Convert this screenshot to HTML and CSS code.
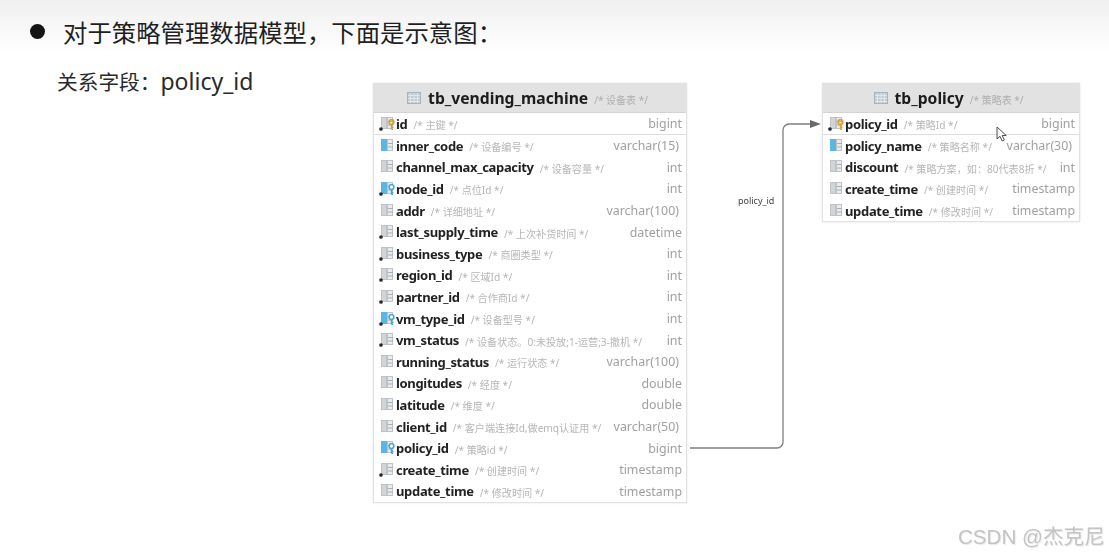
FILE: index.html
```html
<!DOCTYPE html>
<html lang="zh-CN">
<head>
<meta charset="utf-8">
<title>策略管理数据模型</title>
<link rel="stylesheet" href="styles.css">
</head>
<body>
<svg class="defs" width="0" height="0" aria-hidden="true">
  <defs>
    <symbol id="head" viewBox="0 0 14 12">
      <rect x="0" y="0" width="14" height="12" fill="#c3cad3"/>
      <path d="M0 3.500h14M0 6.500h14M0 9.500h14M3.500 0v12M7 0v12M10.500 0v12" stroke="#e3e6ea" stroke-width="1"/>
      <rect x=".5" y=".5" width="13" height="11" fill="none" stroke="#aab2bc"/>
    </symbol>
    <symbol id="grid" viewBox="0 0 12 12">
      <rect x="0" y="0" width="12" height="12" fill="#bfc3c7"/>
      <rect x="1" y="1" width="4" height="10" fill="#d2d5d8"/>
      <path d="M7 1h4v10H7z" fill="#e9ebed"/>
      <path d="M7 4.500h5M7 8h5" stroke="#a9aeb3" stroke-width="1"/>
    </symbol>
    <symbol id="gridblue" viewBox="0 0 12 12">
      <rect x="0" y="0" width="12" height="12" fill="#bfc3c7"/>
      <rect x="0" y="0" width="6" height="12" fill="#5db5e2"/>
      <path d="M7 1h4v10H7z" fill="#e9ebed"/>
      <path d="M7 4.500h5M7 8h5" stroke="#a9aeb3" stroke-width="1"/>
    </symbol>
    <symbol id="dot" viewBox="0 0 5 5"><circle cx="2.500" cy="2.500" r="2.300" fill="#26292c"/></symbol>
    <symbol id="keygold" viewBox="0 0 7 11">
      <circle cx="3.500" cy="3" r="2.400" fill="none" stroke="#dca02e" stroke-width="1.600"/>
      <path d="M3.500 5v5.500M3.500 8.500h2M3.500 10.500h1.500" stroke="#dca02e" stroke-width="1.400" fill="none"/>
    </symbol>
    <symbol id="keyblue" viewBox="0 0 7 11">
      <circle cx="3.500" cy="3" r="2.400" fill="#fff" stroke="#3da6dc" stroke-width="1.500"/>
      <path d="M3.500 5v5.500M3.500 8.500h2M3.500 10.500h1.500" stroke="#3da6dc" stroke-width="1.400" fill="none"/>
    </symbol>
  </defs>
</svg>

<div class="slide">
  <header class="top">
    <h1 class="bullet"><span class="disc"></span>对于策略管理数据模型，下面是示意图：</h1>
    <p class="sub"><span class="sub-cn">关系字段：</span>policy_id</p>
  </header>

  <section class="table t-vm">
    <div class="thead"><svg class="ticon"><use href="#head"/></svg><b>tb_vending_machine</b><i>/* 设备表 */</i></div>
    <div class="row pk"><span class="ic"><svg class="g"><use href="#grid"/></svg><svg class="d"><use href="#dot"/></svg><svg class="k"><use href="#keygold"/></svg></span><b>id</b><i>/* 主键 */</i><em>bigint</em></div>
    <div class="row"><span class="ic"><svg class="g"><use href="#gridblue"/></svg></span><b>inner_code</b><i>/* 设备编号 */</i><em class="vc">varchar(15)</em></div>
    <div class="row"><span class="ic"><svg class="g"><use href="#grid"/></svg></span><b>channel_max_capacity</b><i>/* 设备容量 */</i><em>int</em></div>
    <div class="row"><span class="ic"><svg class="g"><use href="#gridblue"/></svg><svg class="d"><use href="#dot"/></svg><svg class="k"><use href="#keyblue"/></svg></span><b>node_id</b><i>/* 点位Id */</i><em>int</em></div>
    <div class="row"><span class="ic"><svg class="g"><use href="#grid"/></svg></span><b>addr</b><i>/* 详细地址 */</i><em class="vc">varchar(100)</em></div>
    <div class="row"><span class="ic"><svg class="g"><use href="#grid"/></svg><svg class="d"><use href="#dot"/></svg></span><b>last_supply_time</b><i>/* 上次补货时间 */</i><em>datetime</em></div>
    <div class="row"><span class="ic"><svg class="g"><use href="#grid"/></svg><svg class="d"><use href="#dot"/></svg></span><b>business_type</b><i>/* 商圈类型 */</i><em>int</em></div>
    <div class="row"><span class="ic"><svg class="g"><use href="#grid"/></svg><svg class="d"><use href="#dot"/></svg></span><b>region_id</b><i>/* 区域Id */</i><em>int</em></div>
    <div class="row"><span class="ic"><svg class="g"><use href="#grid"/></svg><svg class="d"><use href="#dot"/></svg></span><b>partner_id</b><i>/* 合作商Id */</i><em>int</em></div>
    <div class="row"><span class="ic"><svg class="g"><use href="#gridblue"/></svg><svg class="d"><use href="#dot"/></svg><svg class="k"><use href="#keyblue"/></svg></span><b>vm_type_id</b><i>/* 设备型号 */</i><em>int</em></div>
    <div class="row"><span class="ic"><svg class="g"><use href="#grid"/></svg><svg class="d"><use href="#dot"/></svg></span><b>vm_status</b><i>/* 设备状态。0:未投放;1-运营;3-撤机 */</i><em>int</em></div>
    <div class="row"><span class="ic"><svg class="g"><use href="#grid"/></svg></span><b>running_status</b><i>/* 运行状态 */</i><em class="vc">varchar(100)</em></div>
    <div class="row"><span class="ic"><svg class="g"><use href="#grid"/></svg></span><b>longitudes</b><i>/* 经度 */</i><em>double</em></div>
    <div class="row"><span class="ic"><svg class="g"><use href="#grid"/></svg></span><b>latitude</b><i>/* 维度 */</i><em>double</em></div>
    <div class="row"><span class="ic"><svg class="g"><use href="#grid"/></svg></span><b>client_id</b><i>/* 客户端连接Id,做emq认证用 */</i><em class="vc">varchar(50)</em></div>
    <div class="row"><span class="ic"><svg class="g"><use href="#gridblue"/></svg><svg class="k"><use href="#keyblue"/></svg></span><b>policy_id</b><i>/* 策略id */</i><em>bigint</em></div>
    <div class="row"><span class="ic"><svg class="g"><use href="#grid"/></svg><svg class="d"><use href="#dot"/></svg></span><b>create_time</b><i>/* 创建时间 */</i><em>timestamp</em></div>
    <div class="row"><span class="ic"><svg class="g"><use href="#grid"/></svg></span><b>update_time</b><i>/* 修改时间 */</i><em>timestamp</em></div>
  </section>

  <svg class="link" viewBox="0 0 140 330" aria-hidden="true">
    <path d="M2 327H89a6 6 0 0 0 6-6V9a6 6 0 0 1 6-6H124" fill="none" stroke="#7d7d7d" stroke-width="1.300"/>
    <path d="M122 -1l11 4-11 4z" fill="#6a6a6a"/>
  </svg>
  <span class="linklabel">policy_id</span>

  <section class="table t-policy">
    <div class="thead"><svg class="ticon"><use href="#head"/></svg><b>tb_policy</b><i>/* 策略表 */</i></div>
    <div class="row pk"><span class="ic"><svg class="g"><use href="#grid"/></svg><svg class="d"><use href="#dot"/></svg><svg class="k"><use href="#keygold"/></svg></span><b>policy_id</b><i>/* 策略Id */</i><em>bigint</em></div>
    <div class="row"><span class="ic"><svg class="g"><use href="#gridblue"/></svg></span><b>policy_name</b><i>/* 策略名称 */</i><em class="vc">varchar(30)</em></div>
    <div class="row"><span class="ic"><svg class="g"><use href="#grid"/></svg></span><b>discount</b><i>/* 策略方案，如：80代表8折 */</i><em>int</em></div>
    <div class="row"><span class="ic"><svg class="g"><use href="#grid"/></svg></span><b>create_time</b><i>/* 创建时间 */</i><em>timestamp</em></div>
    <div class="row"><span class="ic"><svg class="g"><use href="#grid"/></svg></span><b>update_time</b><i>/* 修改时间 */</i><em>timestamp</em></div>
  </section>

  <svg class="cursor" viewBox="0 0 12 17" aria-hidden="true">
    <path d="M1 1v12l3-2.700 2.200 4.700 2.200-1-2.200-4.500h4z" fill="#fff" stroke="#4a4a4a" stroke-width="1"/>
  </svg>

  <span class="mark">CSDN @杰克尼</span>
</div>
</body>
</html>
```

FILE: styles.css
```css
* { box-sizing: border-box; }
html, body { margin: 0; padding: 0; background: #fff; }
.defs { position: absolute; }
.slide {
  position: relative;
  width: 1109px;
  height: 557px;
  overflow: hidden;
  font-family: "Noto Sans", "Noto Sans CJK SC", sans-serif;
  filter: blur(0.55px);
}
.top {
  height: 100px;
  padding: 12px 0 0 30px;
  background: linear-gradient(#efefef 0, #f7f7f7 25px, #fff 52px);
}
.bullet {
  display: flex;
  align-items: center;
  margin: 0;
  height: 38px;
  font-size: 24.4px;
  font-weight: 400;
  color: #1f1f1f;
  font-family: "Noto Sans CJK SC", sans-serif;
}
.disc {
  width: 15px;
  height: 15px;
  margin-right: 18px;
  border-radius: 50%;
  background: #141414;
}
.sub {
  margin: 16px 0 0 27px;
  font-size: 23px;
  line-height: 30px;
  color: #2a2a2a;
  font-family: "Noto Sans", "Noto Sans CJK SC", sans-serif;
}
.sub-cn { font-size: 20.7px; }
.table {
  position: absolute;
  top: 83px;
  background: #fff;
  border: 1px solid #e2e2e2;
  border-top: 0;
  box-shadow: 0 0 2px #e4e4e4;
}
.t-vm { left: 373px; width: 314px; height: 420px; }
.t-policy { left: 822px; width: 258px; height: 139px; }
.thead {
  display: flex;
  align-items: center;
  justify-content: center;
  gap: 7px;
  height: 30px;
  padding-right: 5px;
  background: #e2e2e2;
  border-bottom: 1px solid #d4d4d4;
}
.thead b { font-size: 15.7px; font-weight: 700; color: #1c1c1c; }
.thead i { font-size: 10px; font-style: normal; color: #aeaeae; margin-left: -1px; padding-top: 3px; }
.ticon { width: 14px; height: 12px; }
.row {
  display: flex;
  align-items: center;
  height: 21.6px;
  padding: 0 4px 0 5px;
  white-space: nowrap;
}
.row.pk { height: 22px; border-bottom: 1px solid #dedede; }
.ic {
  position: relative;
  flex: none;
  width: 17px;
  height: 14px;
}
.ic .g { position: absolute; left: 2px; top: 0; width: 12px; height: 12px; }
.ic .d { position: absolute; left: 0; top: 10px; width: 4px; height: 4px; }
.ic .k { position: absolute; left: 9px; top: 2px; width: 7px; height: 11px; }
.row b {
  font-size: 13px;
  font-weight: 700;
  letter-spacing: -0.33px;
  color: #222;
}
.row i {
  margin-left: 6px;
  font-size: 10.1px;
  font-style: normal;
  color: #b6b6b6;
  padding-top: 2px;
}
.row em {
  margin-left: auto;
  font-size: 12.4px;
  font-style: normal;
  color: #a0a0a0;
}
.row em.vc { padding-right: 3px; }
.link {
  position: absolute;
  left: 688px;
  top: 121px;
  width: 140px;
  height: 330px;
  overflow: visible;
}
.linklabel {
  position: absolute;
  left: 738px;
  top: 195px;
  font-size: 9px;
  line-height: 12px;
  color: #444;
}
.cursor {
  position: absolute;
  left: 996px;
  top: 126px;
  width: 12px;
  height: 17px;
}
.mark {
  position: absolute;
  left: 958px;
  top: 523px;
  font-family: "Liberation Sans", "Noto Sans CJK SC", sans-serif;
  font-size: 20.6px;
  line-height: 28px;
  color: #c4c4c4;
  text-shadow: 1px 1px 1px #e8e8e8;
}
```
